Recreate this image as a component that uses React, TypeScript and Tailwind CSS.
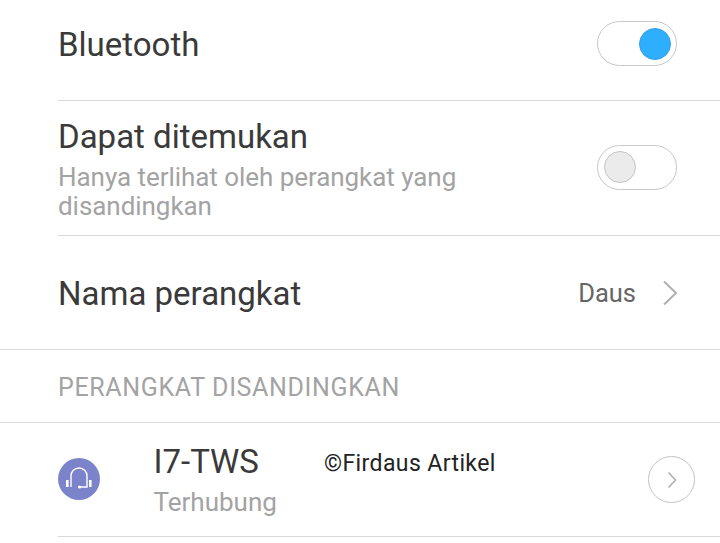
import React from "react";

function Toggle({ on }: { on: boolean }) {
  return (
    <div
      className={`flex h-[45px] w-[80px] items-center rounded-full border border-[#c8c8c8] bg-white ${
        on ? "justify-end pr-[5px]" : "justify-start pl-[6px]"
      }`}
    >
      <div
        className={`h-[32px] w-[32px] rounded-full border ${
          on ? "border-[#3c9fe0] bg-[#2eaeff]" : "border-[#c4c4c4] bg-[#ebebeb]"
        }`}
      />
    </div>
  );
}

export default function App() {
  return (
    <div className="h-[543px] w-[720px] overflow-hidden bg-white font-['Roboto',sans-serif]">
      <div className="ml-[58px] flex h-[101px] items-center justify-between border-b border-[#d9d9d9] pb-[13px] pr-[43px]">
        <span className="mt-[2px] text-[33px] leading-none text-[#3a3a3a]">Bluetooth</span>
        <Toggle on />
      </div>

      <div className="ml-[58px] flex h-[135px] items-center justify-between border-b border-[#d9d9d9] pr-[43px]">
        <div className="mt-[4px] w-[420px]">
          <div className="text-[33px] leading-[36px] text-[#3a3a3a]">Dapat ditemukan</div>
          <div className="mt-[8px] text-[26px] leading-[29px] tracking-[-0.05px] text-[#a3a3a3]">
            Hanya terlihat oleh perangkat yang disandingkan
          </div>
        </div>
        <div className="mb-[2px]">
          <Toggle on={false} />
        </div>
      </div>

      <div className="flex h-[114px] items-center justify-between border-b border-[#d9d9d9] pl-[58px] pr-[42px]">
        <span className="mt-[2px] text-[33px] leading-none text-[#3a3a3a]">Nama perangkat</span>
        <div className="flex items-center gap-[26px]">
          <span className="mt-[2px] text-[25.500px] leading-none text-[#666666]">Daus</span>
          <svg width="16" height="26" viewBox="0 0 16 26" fill="none" stroke="#b0b0b0" strokeWidth="2">
            <path d="M2 1.500 14 13 2 24.500" />
          </svg>
        </div>
      </div>

      <div className="flex h-[73px] items-center border-b border-[#d9d9d9] pl-[58px]">
        <span className="mt-[2px] text-[25px] leading-none tracking-[0.65px] text-[#a3a3a3]">PERANGKAT DISANDINGKAN</span>
      </div>

      <div className="ml-[58px] flex h-[114px] items-center border-b border-[#d9d9d9] pr-[25px]">
        <div className="mb-[2px] h-[42px] w-[42px] rounded-full bg-[#7b83cb]">
          <svg width="42" height="42" viewBox="0 0 42 42" fill="none" stroke="#ffffff" strokeWidth="1.400">
            <path d="M13 29V18a8 8 0 0 1 16 0v11h-7.500" />
            <rect x="8" y="22" width="2.600" height="7" fill="#ffffff" stroke="none" />
            <rect x="31" y="22" width="2.600" height="7" fill="#ffffff" stroke="none" />
            <circle cx="21.500" cy="29" r="1.500" fill="#ffffff" stroke="none" />
          </svg>
        </div>
        <div className="ml-[53.500px] mt-[2px] flex-1">
          <div className="flex items-center">
            <span className="w-[170.500px] text-[33px] leading-[38px] text-[#3a3a3a]">I7-TWS</span>
            <span className="mt-[2px] text-[23px] leading-none tracking-[0.4px] text-[#222222]">©Firdaus Artikel</span>
          </div>
          <div className="mt-[5px] text-[26px] leading-[32px] text-[#a3a3a3]">Terhubung</div>
        </div>
        <div className="flex h-[47px] w-[47px] items-center justify-center rounded-full border border-[#c4c4c4]">
          <svg width="10" height="18" viewBox="0 0 10 18" fill="none" stroke="#b0b0b0" strokeWidth="1.600">
            <path d="M1.500 1.500 8.500 9 1.500 16.500" />
          </svg>
        </div>
      </div>
    </div>
  );
}
